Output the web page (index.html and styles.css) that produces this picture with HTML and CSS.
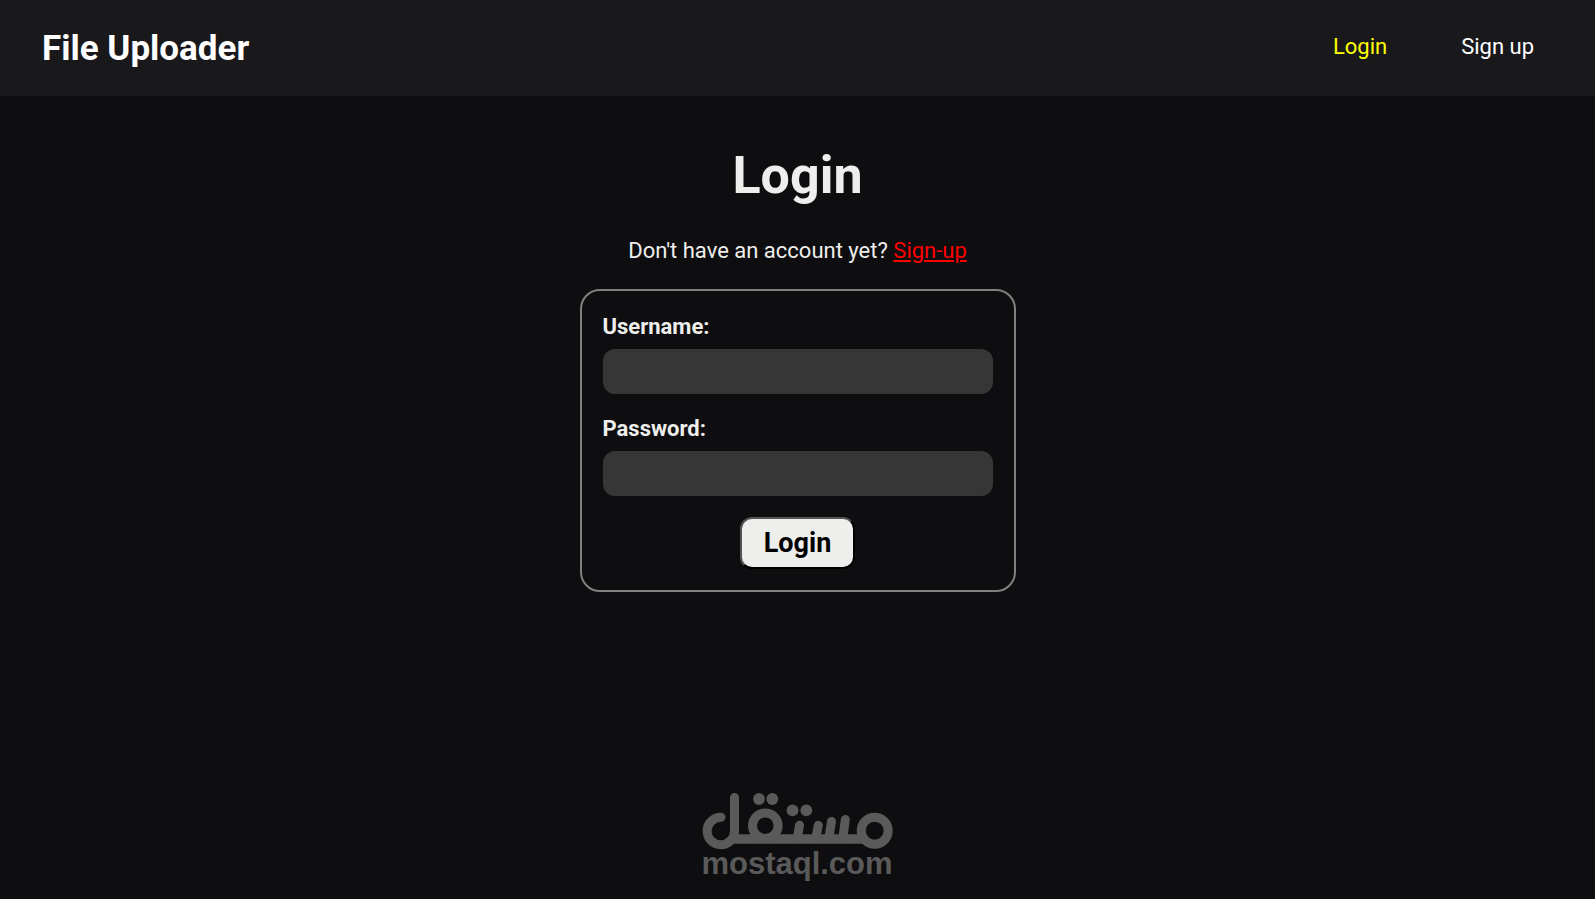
FILE: index.html
```
<!DOCTYPE html>
<html lang="en">
<head>
    <meta charset="UTF-8">
    <meta name="viewport" content="width=device-width, initial-scale=1.0">
    <title>File Uploader</title>
    <link rel="stylesheet" href="styles.css">
</head>
<body>
    <header class="header">
        <div class="brand">File Uploader</div>
        <nav class="nav">
            <a href="#login" class="active">Login</a>
            <a href="#signup">Sign up</a>
        </nav>
    </header>

    <main class="container">
        <h1>Login</h1>
        <p class="hint">Don't have an account yet? <a href="#signup">Sign-up</a></p>

        <form class="login-form">
            <div class="input-group">
                <label for="username">Username:</label>
                <input type="text" id="username" name="username" required>
            </div>
            <div class="input-group">
                <label for="password">Password:</label>
                <input type="password" id="password" name="password" required>
            </div>
            <button type="submit">Login</button>
        </form>
    </main>

    <footer class="footer">
        <svg class="logo" width="215" height="110" viewBox="0 0 215 110" role="img" aria-label="mostaql.com">
            <g fill="none" stroke="currentColor" stroke-width="9" stroke-linecap="round">
                <path d="M31 37.3A13.7 13.7 0 1 0 44.5 51V17.5"/>
                <path d="M42 59H176" stroke-width="9.4" stroke-linecap="butt"/>
                <circle cx="75.3" cy="45.7" r="12.8"/>
                <path d="M109.5 45.3L107.5 57M128.3 45.3L126 57M141.5 41.5L139 57M155.3 39.5L153 57"/>
                <circle cx="184.7" cy="50.7" r="13.5"/>
            </g>
            <g fill="currentColor">
                <circle cx="69" cy="19" r="5.9"/>
                <circle cx="82.3" cy="19" r="5.9"/>
                <circle cx="102.5" cy="30.4" r="5.9"/>
                <circle cx="116.3" cy="30.4" r="5.9"/>
            </g>
            <text x="107" y="94" text-anchor="middle">mostaql.com</text>
        </svg>
    </footer>
</body>
</html>
```

FILE: styles.css
```
* {
    box-sizing: border-box;
}

body {
    font-family: Roboto, Arial, sans-serif;
    font-size: 22px;
    line-height: 26px;
    margin: 0;
    min-height: 100vh;
    display: flex;
    flex-direction: column;
    background-color: #0e0e10;
    color: #eeeeec;
}

/* Top bar */
.header {
    display: flex;
    justify-content: space-between;
    align-items: center;
    height: 96px;
    padding: 0 61px 0 42px;
    background-color: #19191b;
    color: white;
}

.brand {
    padding-top: 2px;
    font-size: 35px;
    font-weight: bold;
}

.nav {
    display: flex;
    gap: 74px;
    padding-bottom: 2px;
}

.nav a {
    color: white;
    text-decoration: none;
}

.nav a.active {
    color: yellow;
}

/* Login */
.container {
    display: flex;
    flex-direction: column;
    align-items: center;
    padding: 49px 20px 0;
}

h1 {
    margin: 0;
    font-size: 52px;
    line-height: 62px;
}

.hint {
    margin: 31px 0 25px;
}

.hint a {
    color: red;
}

.login-form {
    display: flex;
    flex-direction: column;
    align-items: center;
    gap: 21px;
    width: 100%;
    max-width: 436px;
    padding: 23px 21px 21px;
    border: 2px solid gray;
    border-radius: 20px;
}

.input-group {
    display: flex;
    flex-direction: column;
    gap: 9px;
    width: 100%;
}

.input-group + .input-group {
    padding-top: 1px;
}

label {
    font-weight: bold;
}

input {
    width: 100%;
    height: 45px;
    padding: 0 12px;
    border: none;
    border-radius: 12px;
    background-color: #363636;
    color: #eeeeec;
    font: inherit;
}

button {
    padding: 8px 22px;
    border: 2px outset black;
    border-radius: 12px;
    background-color: #eeeeec;
    color: black;
    font-family: inherit;
    font-size: 27px;
    font-weight: bold;
    line-height: 32px;
    cursor: pointer;
}

/* Logo at the bottom of the page */
.footer {
    display: flex;
    justify-content: center;
    margin-top: auto;
    padding: 0 0 9px;
}

.logo {
    color: #5a5a5a;
}

.logo text {
    fill: currentColor;
    font-family: "Liberation Sans", Arial, sans-serif;
    font-size: 31px;
    font-weight: bold;
}
```
